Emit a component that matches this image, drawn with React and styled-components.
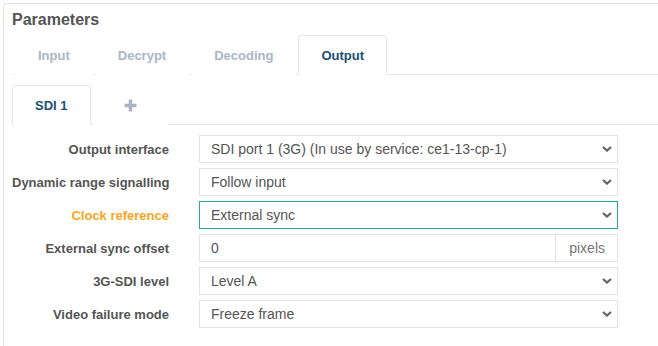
import React from "react";
import styled, { createGlobalStyle } from "styled-components";

const Global = createGlobalStyle`
  html, body { margin: 0; padding: 0; background: #fff; }
  body { font-family: "Liberation Sans", Arial, Helvetica, sans-serif; color: #555; }
  * { box-sizing: border-box; }
`;

const Panel = styled.section`
  margin: 3px 0 0 3px;
  min-height: 343px;
  border-top: 1px solid #e0e0e0;
  border-left: 1px solid #e0e0e0;
  border-top-left-radius: 4px;
  padding: 6px 0 0 8px;
`;

const Title = styled.h2`
  margin: 0;
  font-size: 16px;
  line-height: 20px;
  font-weight: bold;
  color: #555;
`;

const TabBar = styled.div`
  display: flex;
  margin-top: 5px;
  border-bottom: 1px solid #e6e6e6;
  padding-left: ${(p) => p.$indent || 0}px;
`;

const Tab = styled.div`
  padding: 0 ${(p) => p.$pad || 22}px;
  margin-right: 2px;
  margin-bottom: -1px;
  height: 40px;
  display: flex;
  align-items: center;
  font-size: 13px;
  font-weight: bold;
  color: ${(p) => (p.$active ? "#1b4f7a" : "#a9b6c7")};
  border: 1px solid ${(p) => (p.$active ? "#e6e6e6" : "transparent")};
  border-bottom-color: ${(p) => (p.$active ? "#fff" : "transparent")};
  border-radius: 4px 4px 0 0;
  background: #fff;
`;

const SubTabBar = styled(TabBar)`
  margin-top: 10px;
`;

const Form = styled.div`
  display: grid;
  grid-template-columns: 157px 419px;
  column-gap: 30px;
  row-gap: 5px;
  margin-top: 10px;
  align-items: center;
`;

const Label = styled.label`
  text-align: right;
  font-size: 13px;
  font-weight: bold;
  white-space: nowrap;
  color: ${(p) => (p.$warn ? "#f5a623" : "#555")};
`;

const Box = styled.div`
  height: 28px;
  display: flex;
  align-items: center;
  border: 1px solid ${(p) => (p.$focus ? "#2aa785" : "#e3e3e3")};
  background: #fff;
  font-size: 14px;
  color: #555;
`;

const BoxText = styled.span`
  flex: 1;
  padding-left: 11px;
  white-space: nowrap;
`;

const Chevron = styled.svg`
  width: 10px;
  height: 6px;
  margin-right: 5px;
  flex: none;
`;

const Addon = styled.span`
  align-self: stretch;
  display: flex;
  align-items: center;
  border-left: 1px solid #e3e3e3;
  padding: 0 12px 0 13px;
  color: #777;
  font-size: 14px;
`;

const Select = ({ value, focus }) => (
  <Box $focus={focus}>
    <BoxText>{value}</BoxText>
    <Chevron viewBox="0 0 10 6">
      <path d="M1 1 L5 4.6 L9 1" fill="none" stroke="#666" strokeWidth="2.2" />
    </Chevron>
  </Box>
);

const Plus = () => (
  <svg width="13" height="13" viewBox="0 0 13 13">
    <path d="M6.5 0.5 V12.5 M0.5 6.5 H12.5" stroke="#a9b4c4" strokeWidth="3.4" />
  </svg>
);

export default function App() {
  return (
    <>
      <Global />
      <Panel>
        <Title>Parameters</Title>
        <TabBar $indent={3}>
          <Tab>Input</Tab>
          <Tab>Decrypt</Tab>
          <Tab>Decoding</Tab>
          <Tab $active>Output</Tab>
        </TabBar>
        <SubTabBar>
          <Tab $active>SDI 1</Tab>
          <Tab $pad={30}>
            <Plus />
          </Tab>
        </SubTabBar>
        <Form>
          <Label>Output interface</Label>
          <Select value="SDI port 1 (3G) (In use by service: ce1-13-cp-1)" />
          <Label>Dynamic range signalling</Label>
          <Select value="Follow input" />
          <Label $warn>Clock reference</Label>
          <Select value="External sync" focus />
          <Label>External sync offset</Label>
          <Box>
            <BoxText>0</BoxText>
            <Addon>pixels</Addon>
          </Box>
          <Label>3G-SDI level</Label>
          <Select value="Level A" />
          <Label>Video failure mode</Label>
          <Select value="Freeze frame" />
        </Form>
      </Panel>
    </>
  );
}
